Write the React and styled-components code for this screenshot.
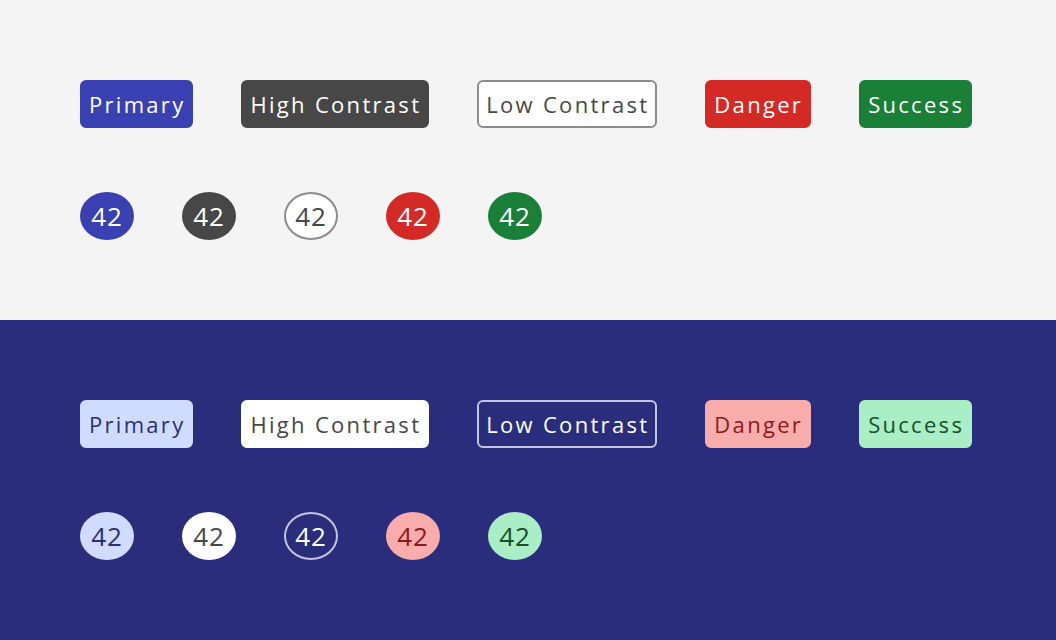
import React from "react";
import styled, { createGlobalStyle } from "styled-components";

const Global = createGlobalStyle`
  html, body { margin: 0; padding: 0; }
  body { font-family: "Open Sans", "Liberation Sans", sans-serif; }
`;

const themes = {
  light: {
    bg: "#f4f4f4",
    primary: { bg: "#3940b1", fg: "#ffffff", border: "#3940b1" },
    high: { bg: "#474747", fg: "#ffffff", border: "#474747" },
    low: { bg: "#ffffff", fg: "#474747", border: "#8c8c8c" },
    danger: { bg: "#d42a25", fg: "#ffffff", border: "#d42a25" },
    success: { bg: "#1a7f37", fg: "#ffffff", border: "#1a7f37" },
  },
  dark: {
    bg: "#2a2d7c",
    primary: { bg: "#d0dcff", fg: "#2a2d7c", border: "#d0dcff" },
    high: { bg: "#ffffff", fg: "#474747", border: "#ffffff" },
    low: { bg: "#2a2d7c", fg: "#ffffff", border: "#c4c4dc" },
    danger: { bg: "#f9acac", fg: "#8a1a1a", border: "#f9acac" },
    success: { bg: "#a9eec5", fg: "#174f28", border: "#a9eec5" },
  },
};

const Section = styled.section`
  background: ${(p) => p.$bg};
  height: 320px;
  box-sizing: border-box;
  padding: 80px;
  display: flex;
  flex-direction: column;
  gap: 64px;
`;

const Row = styled.div`
  display: flex;
  gap: 48px;
  align-items: center;
`;

const Tag = styled.span`
  box-sizing: border-box;
  height: 48px;
  padding: 0 6px 0 7px;
  display: inline-flex;
  align-items: center;
  border-radius: 6px;
  background: ${(p) => p.$c.bg};
  color: ${(p) => p.$c.fg};
  border: 2px solid ${(p) => p.$c.border};
  font-size: 22px;
  letter-spacing: 2.3px;
  white-space: nowrap;
`;

const Count = styled.span`
  box-sizing: border-box;
  width: 54px;
  height: 48px;
  display: inline-flex;
  align-items: center;
  justify-content: center;
  border-radius: 50%;
  background: ${(p) => p.$c.bg};
  color: ${(p) => p.$c.fg};
  border: 2px solid ${(p) => p.$c.border};
  font-size: 26px;
  letter-spacing: 1px;
`;

const items = [
  ["primary", "Primary"],
  ["high", "High Contrast"],
  ["low", "Low Contrast"],
  ["danger", "Danger"],
  ["success", "Success"],
];

function Panel({ t }) {
  return (
    <Section $bg={t.bg}>
      <Row>
        {items.map(([k, label]) => (
          <Tag key={k} $c={t[k]}>{label}</Tag>
        ))}
      </Row>
      <Row>
        {items.map(([k]) => (
          <Count key={k} $c={t[k]}>42</Count>
        ))}
      </Row>
    </Section>
  );
}

export default function App() {
  return (
    <>
      <Global />
      <Panel t={themes.light} />
      <Panel t={themes.dark} />
    </>
  );
}
